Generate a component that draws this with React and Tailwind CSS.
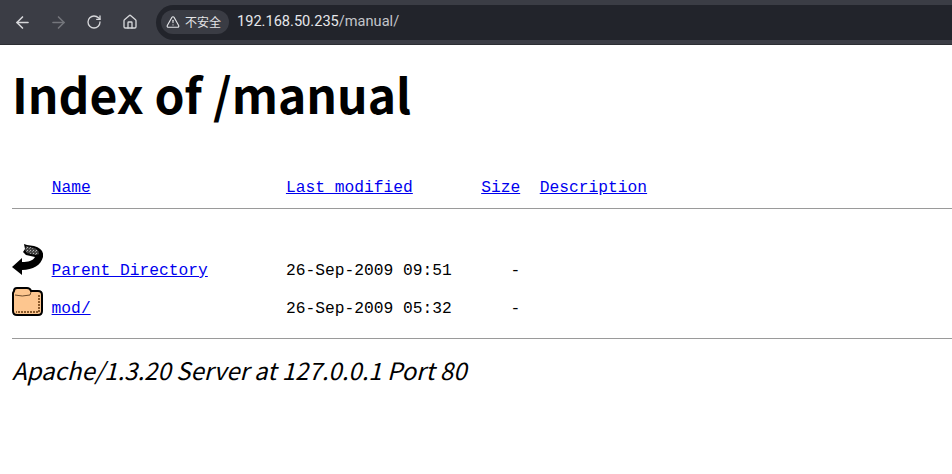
import { ArrowLeft, ArrowRight, RotateCw, House, TriangleAlert } from 'lucide-react';

function BackIcon() {
  return (
    <svg width="31" height="32" viewBox="0 0 31 32" className="block shrink-0 mb-[4px]">
      <defs>
        <pattern id="dither" width="3" height="3" patternUnits="userSpaceOnUse">
          <rect width="3" height="3" fill="#444" />
          <rect width="1" height="1" fill="#bbb" />
          <rect x="2" y="1" width="1" height="1" fill="#888" />
        </pattern>
      </defs>
      <path d="M12 0 L15 1 L22 2 C29 4 32 8 31 13 C29 21 21 26 10 26 L10 31 L0 23 L10 14 L10 18 C16 18 21 17 23 13 L14 11 L11 8 L13 5 Z" fill="#000" />
      <path d="M14 2 L22 4 C25 5 27 7 27 10 L24 11 L15 9 L13 6 Z" fill="url(#dither)" />
    </svg>
  );
}

function FolderIcon() {
  return (
    <svg width="31" height="29" viewBox="0 0 31 29" className="block shrink-0 mb-[2px]">
      <path d="M2 4 Q2 1 5 1 L15 1 Q18 1 19 4 L26 4 Q30 4 30 8 L30 24 Q30 28 26 28 L5 28 Q1 28 1 24 L1 6 Z" fill="#fdc68f" stroke="#000" strokeWidth="2" />
      <path d="M3 8 Q10 10 18 8 L19 5" fill="none" stroke="#6b4a2a" strokeWidth="1" />
      <path d="M27 8 L27 25 L4 25" fill="none" stroke="#8a5a2b" strokeWidth="2" strokeDasharray="2 1" />
    </svg>
  );
}

function Link({ children }) {
  return <a href="#" className="text-[#0000ee] underline">{children}</a>;
}

export default function App() {
  return (
    <div className="min-h-screen bg-white text-black">
      <div className="h-[45px] bg-[#3b3d45] flex items-center pl-1 border-b border-[#2c2e33]">
        <div className="w-9 flex justify-center"><ArrowLeft size={19} className="text-[#d6d7da]" /></div>
        <div className="w-9 flex justify-center"><ArrowRight size={19} className="text-[#74767c]" /></div>
        <div className="w-9 flex justify-center"><RotateCw size={16} className="text-[#d6d7da]" /></div>
        <div className="w-9 flex justify-center"><House size={16} className="text-[#d6d7da]" /></div>
        <div className="flex-1 h-[35px] ml-2 rounded-l-full bg-[#22242b] flex items-center pl-[5px] font-['Noto_Sans_CJK_SC',sans-serif]">
          <div className="h-[24px] pl-[5px] pr-[8px] rounded-full bg-[#3a3c44] flex items-center gap-[5px] text-[12px] text-[#e3e4e7]">
            <TriangleAlert size={14} />
            <span>不安全</span>
          </div>
          <div className="ml-[8px] text-[14.6px] text-[#e6e7ea] font-['Roboto',sans-serif]">
            192.168.50.235<span className="text-[#c3c5ca]">/manual/</span>
          </div>
        </div>
      </div>

      <div className="pl-3">
        <h1 className="mt-[15px] text-[48px] leading-[66px] font-bold font-['Noto_Sans_CJK_SC',sans-serif]">Index of /manual</h1>

        <pre className="mt-[52px] pl-[0.6px] font-['Liberation_Mono',monospace] text-[16.28px] leading-[19px]">
          {'    '}<Link>Name</Link>{'                    '}<Link>Last modified</Link>{'       '}<Link>Size</Link>{'  '}<Link>Description</Link>
        </pre>
        <hr className="mt-[11px] border-t border-[#9a9a9a]" />

        <pre className="mt-[35px] font-['Liberation_Mono',monospace] text-[16.28px] leading-[19px]">
          <div className="flex items-end">
            <BackIcon />
            <span className="ml-[8.6px]"><Link>Parent Directory</Link>{'        '}26-Sep-2009 09:51      -</span>
          </div>
          <div className="flex items-end mt-[7px]">
            <FolderIcon />
            <span className="ml-[8.6px]"><Link>mod/</Link>{'                    '}26-Sep-2009 05:32      -</span>
          </div>
        </pre>
        <hr className="mt-[20px] border-t border-[#9a9a9a]" />

        <address className="mt-[13px] text-[24px] leading-[36px] italic font-['Noto_Sans_CJK_SC',sans-serif]">Apache/1.3.20 Server at 127.0.0.1 Port 80</address>
      </div>
    </div>
  );
}
